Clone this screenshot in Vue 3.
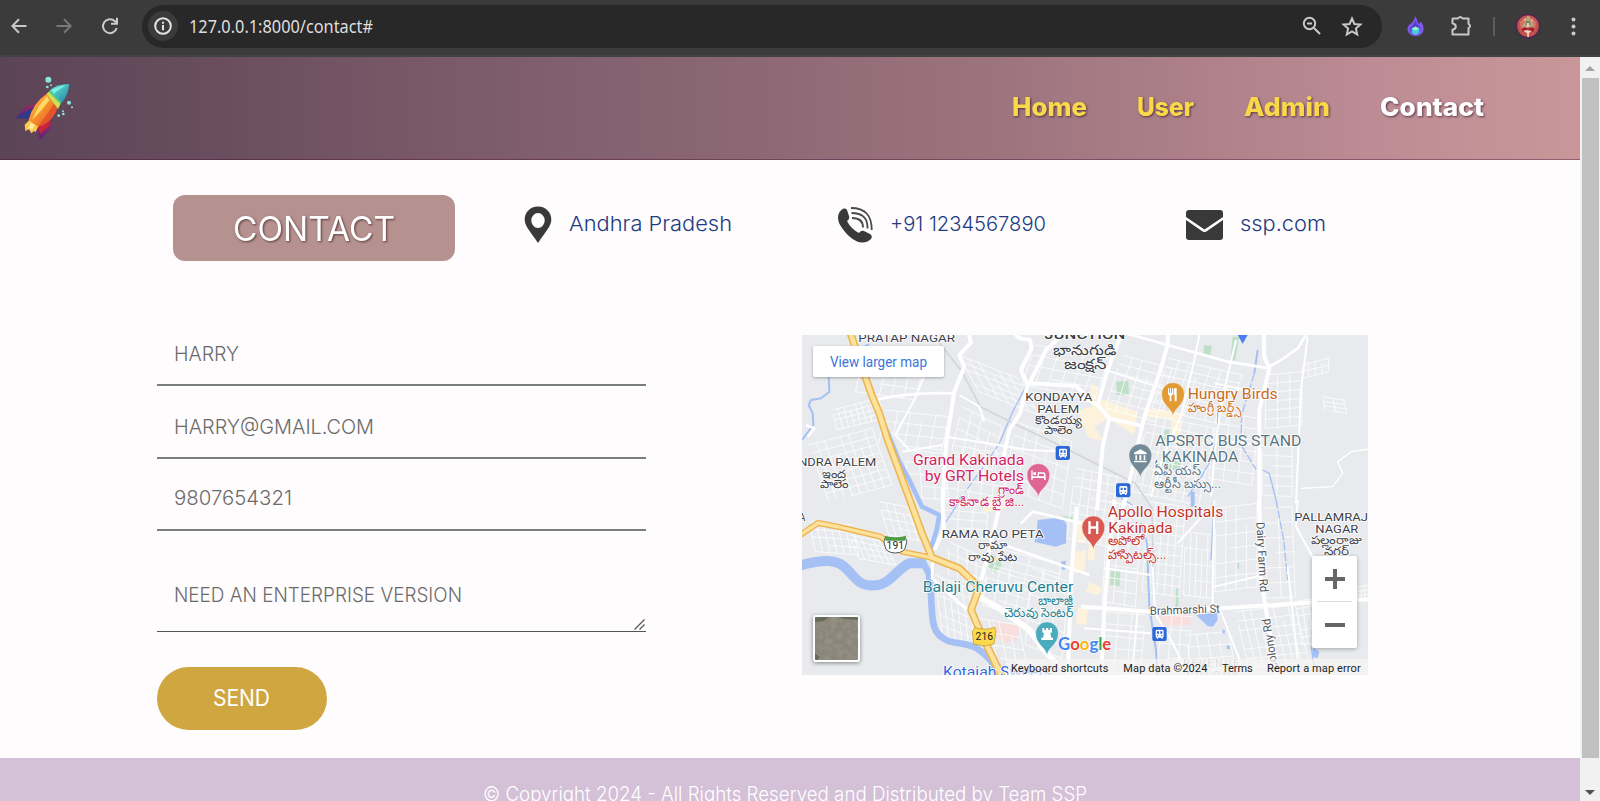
<script setup>
import { h } from 'vue'

// Single line of text fitted to a given width; the box bottom is the baseline.
const FitText = (p) =>
  h('svg', { width: p.w, height: p.size, class: 'fit' }, [
    h('text', { x: 0, y: p.size, 'font-size': p.size, textLength: p.w, lengthAdjust: 'spacingAndGlyphs', fill: 'currentColor' }, p.text),
  ])
FitText.props = ['text', 'w', 'size']

const nav = [
  { t: 'Home', w: 75 },
  { t: 'User', w: 57 },
  { t: 'Admin', w: 86 },
  { t: 'Contact', w: 104, on: true },
]

const fields = [
  { t: 'HARRY', w: 65 },
  { t: 'HARRY@GMAIL.COM', w: 200 },
  { t: '9807654321', w: 118 },
]

// Map labels: [text, x, baseline, width, kind]
const labelSize = { area: 33, big: 38, te: 35, teBig: 43, poi: 45, tePoi: 39 }
const labels = [
  { color: '#3c4148', items: [
    ['PRATAP NAGAR', 169, 21, 290, 'area'],
    ['JUNCTION', 727, 13, 243, 'big'],
    ['భానుగుడి', 754, 60, 190, 'teBig'],
    ['జంక్షన్', 787, 103, 126, 'teBig'],
    ['KONDAYYA', 670, 198, 201, 'area'],
    ['PALEM', 706, 233, 126, 'area'],
    ['కొండయ్య', 699, 266, 141, 'te'],
    ['పాలెం', 726, 297, 87, 'te'],
    ['INDRA PALEM', -22, 393, 245, 'area'],
    ['ఇంద్ర', 60, 428, 72, 'te'],
    ['పాలెం', 53, 458, 86, 'te'],
    ['A', -10, 557, 20, 'area'],
    ['RAMA RAO PETA', 419, 609, 306, 'area'],
    ['రామా', 529, 641, 87, 'te'],
    ['రావు పేట', 498, 679, 148, 'te'],
    ['PALLAMRAJ', 1477, 557, 221, 'area'],
    ['NAGAR', 1540, 593, 129, 'area'],
    ['పల్లంరాజు', 1527, 627, 150, 'te'],
    ['నగర్', 1565, 659, 77, 'te'],
  ] },
  { color: '#d21e63', items: [
    ['Grand Kakinada', 333, 390, 334, 'poi'],
    ['by GRT Hotels', 368, 438, 298, 'poi'],
    ['గ్రాండ్', 587, 477, 80, 'tePoi'],
    ['కాకినాడ బై జి...', 442, 514, 225, 'tePoi'],
  ] },
  { color: '#c96b18', items: [
    ['Hungry Birds', 1157, 191, 270, 'poi'],
    ['హంగ్రీ బర్డ్స్', 1157, 232, 163, 'tePoi'],
  ] },
  { color: '#5b7482', items: [
    ['APSRTC BUS STAND', 1060, 332, 438, 'poi'],
    [', KAKINADA', 1058, 380, 251, 'poi'],
    ['ఏపీ యస్', 1057, 419, 140, 'tePoi'],
    ['ఆర్టీసీ బస్సు...', 1057, 458, 200, 'tePoi'],
  ] },
  { color: '#c5322b', items: [
    ['Apollo Hospitals', 917, 547, 347, 'poi'],
    ['Kakinada', 919, 594, 193, 'poi'],
    ['అపోలో', 917, 631, 108, 'tePoi'],
    ['హాస్పిటల్స్...', 917, 671, 176, 'tePoi'],
  ] },
  { color: '#20808f', items: [
    ['Balaji Cheruvu Center', 362, 772, 452, 'poi'],
    ['బాలాజీ', 707, 810, 107, 'tePoi'],
    ['చెరువు సెంటర్', 605, 847, 209, 'tePoi'],
  ] },
  { color: '#3069dc', items: [['Kotaiah Sweets', 423, 1026, 325, 'poi']] },
]

// Street mesh: a slanted grid as one path.
function mesh(x, y, w, hgt, nx, ny, sx = 0, sy = 0) {
  let d = ''
  for (let i = 0; i <= nx; i++) {
    const a = x + (w * i) / nx
    const o = (sy * i) / nx
    const cut = (i * 37) % 3 === 0 ? 0.25 : 0
    d += `M${a + sx * cut} ${y + o + hgt * cut}L${a + sx} ${y + hgt + o}`
  }
  for (let j = 0; j <= ny; j++) {
    const b = y + (hgt * j) / ny
    const o = (sx * j) / ny
    const cut = (j * 23) % 4 === 1 ? 0.35 : 0
    d += `M${x + o + w * cut} ${b + sy * cut}L${x + w + o} ${b + sy}`
  }
  return d
}

const streets = [
  mesh(90, 225, 140, 60, 8, 4, 15, -35),
  mesh(20, 330, 190, 170, 8, 7, 60, -50),
  mesh(190, 40, 180, 130, 5, 4, -30, 25),
  mesh(250, 225, 190, 100, 5, 3, -20, 20),
  mesh(310, 345, 120, 140, 3, 4, 10, 10),
  mesh(470, 60, 180, 110, 6, 5, 60, 70),
  mesh(480, 215, 120, 130, 4, 4, -30, 60),
  mesh(450, 330, 170, 160, 5, 5, -20, 30),
  mesh(700, 30, 220, 120, 6, 4, -40, 40),
  mesh(640, 260, 170, 200, 5, 5, -30, 60),
  mesh(820, 400, 150, 210, 6, 8, -25, 30),
  mesh(960, 60, 150, 160, 5, 6, -50, 40),
  mesh(1100, 70, 220, 150, 7, 6, -50, 50),
  mesh(1040, 240, 200, 230, 8, 9, -50, 40),
  mesh(1240, 230, 130, 200, 3, 6, -20, 20),
  mesh(1390, 120, 110, 160, 3, 6, 0, -10),
  mesh(1380, 300, 90, 180, 2, 6, 0, 5),
  mesh(1500, 90, 80, 40, 4, 2, 0, -20),
  mesh(1560, 185, 65, 40, 2, 3, 10, 10),
  mesh(1040, 500, 110, 270, 5, 9, -20, 15),
  mesh(920, 500, 100, 300, 3, 8, -20, 15),
  mesh(1150, 590, 85, 190, 5, 4, -5, 10),
  mesh(1240, 520, 125, 250, 4, 6, 0, -15),
  mesh(1385, 520, 85, 270, 2, 6, 10, -5),
  mesh(1300, 830, 180, 170, 8, 6, 40, -20),
  mesh(1480, 800, 110, 130, 6, 6, 20, -20),
  mesh(1080, 840, 90, 170, 3, 4, -15, 5),
  mesh(910, 830, 120, 180, 3, 5, -15, 10),
  mesh(1150, 900, 130, 110, 4, 3, 20, -10),
  mesh(20, 560, 130, 90, 6, 4, 20, 10),
  mesh(140, 600, 110, 70, 6, 4, 30, 20),
  mesh(230, 500, 110, 100, 5, 4, 30, 20),
  mesh(440, 620, 110, 100, 4, 3, 0, 50),
  mesh(400, 720, 100, 180, 5, 6, 20, 40),
  mesh(590, 640, 190, 80, 4, 3, -20, 50),
  mesh(560, 700, 130, 110, 4, 4, -20, 40),
  mesh(690, 700, 110, 230, 3, 6, -20, 40),
  mesh(530, 850, 120, 150, 4, 4, 30, 20),
  mesh(430, 500, 130, 100, 3, 4, -10, 10),
  mesh(1610, 760, 90, 40, 8, 3, 0, -8),
]

const attribution = [
  ['Keyboard shortcuts', 627, 292],
  ['Map data ©2024', 964, 252],
  ['Terms', 1260, 92],
  ['Report a map error', 1395, 281],
]
</script>

<template>
  <div class="window">
    <div class="toolbar">
      <svg class="ti back" width="16" height="16" viewBox="0 0 16 16"><path d="M15.500 8H2M8 1.300L1.300 8L8 14.700" /></svg>
      <svg class="ti fwd" width="16" height="16" viewBox="0 0 16 16"><path d="M.5 8H14M8 1.300L14.700 8L8 14.700" /></svg>
      <svg class="ti reload" width="18" height="18" viewBox="0 0 18 18"><path d="M15.700 11A7 7 0 1 1 14 4.300L16 6.500M16 .8V6.700H10" /></svg>
      <div class="omni">
        <span class="info">
          <svg width="18" height="18" viewBox="0 0 18 18"><circle cx="9" cy="9" r="7.800" fill="none" stroke="#e3e3e3" stroke-width="2" /><path d="M9 8V13.200M9 4.700V6.700" stroke="#e3e3e3" stroke-width="2" /></svg>
        </span>
        <span class="url"><FitText text="127.0.0.1:8000/contact#" :w="184" :size="18" /></span>
        <svg class="ti mag" width="20" height="20" viewBox="0 0 20 20"><circle cx="7.500" cy="7.500" r="5.700" /><path d="M12 12L18 18M5 7.500H10" /></svg>
        <svg class="ti star" width="22" height="21" viewBox="0 0 22 21"><path d="M11 2.500L13.400 8L19.400 8.600L14.900 12.600L16.200 18.500L11 15.400L5.800 18.500L7.100 12.600L2.600 8.600L8.600 8Z" /></svg>
      </div>
      <svg class="flame" width="17" height="20" viewBox="0 0 17 20">
        <path d="M8 0C11 4 10 6 12 8C13 7 13 6 13 5C16 8 17 11 16.500 14C16 18 12 20 8.500 20C4 20 .5 17 .5 13C.5 9 4 8 5.500 6C7 4 8 2 8 0Z" fill="#7a58ea" />
        <path d="M8 4C9 8 12 9 13 12L12 17H4L3 12C5 10 8 8 8 4Z" fill="#5a39d0" />
        <path d="M8.500 10.500L12.300 12.500V17L8.500 19L4.700 17V12.500Z" fill="#4cc8e0" /><path d="M8.500 10.500L12.300 12.500L8.500 14.500L4.700 12.500Z" fill="#8df5c8" />
      </svg>
      <svg class="ti puzzle" width="23" height="22" viewBox="0 0 23 22"><path d="M3 3.500H8Q10.300 .6 12.600 3.500H18.500V8.700Q21.600 11 18.500 13.300V19.500H2.500V14.800Q5.800 14 5.800 11.500Q5.800 9 2.500 8.200V4Z" stroke-linejoin="round" /></svg>
      <i class="sep"></i>
      <svg class="avatar" width="26" height="26" viewBox="0 0 26 26">
        <circle cx="13" cy="13" r="11.500" fill="#c2534e" stroke="#542255" stroke-width="1.400" />
        <path d="M5 9Q13 -1 21 9L20 18L13 12L6 18Z" fill="#d87463" />
        <path d="M12 3H14.500L15.500 7L19 11L17.500 15L14 14L9 16L7 13L10 9Z" fill="#b9a27a" />
        <path d="M11 8H15L15.500 12H10.500Z" fill="#748466" /><path d="M6 16L10 14L13 16L17 14L20 16L18 19H8Z" fill="#a5202b" />
        <path d="M12 10H14V14H12ZM10 5L11 7L9 8ZM17 6L16 8L18 9ZM8 18L12 17L17 18L14 20V24H12.300L12 20Z" fill="#f0d0bd" />
      </svg>
      <svg class="dots" width="5" height="19" viewBox="0 0 5 19"><circle cx="2.500" cy="2.500" r="2" /><circle cx="2.500" cy="9.500" r="2" /><circle cx="2.500" cy="16.500" r="2" /></svg>
    </div>

    <div class="viewport">
      <div class="page">
        <header class="head">
          <svg class="rocket" width="60" height="66" viewBox="0 0 180 198">
            <defs>
              <linearGradient id="body" x1="0" y1="0" x2="1" y2="1"><stop offset="0" stop-color="#ffcf4e" /><stop offset=".5" stop-color="#f78a2b" /><stop offset="1" stop-color="#dc4625" /></linearGradient>
              <linearGradient id="fin" x1="0" y1="0" x2="0" y2="1"><stop offset="0" stop-color="#d12f45" /><stop offset="1" stop-color="#5a2280" /></linearGradient>
              <linearGradient id="nose" x1="0" y1="0" x2="1" y2="1"><stop offset="0" stop-color="#67efdd" /><stop offset="1" stop-color="#207f9c" /></linearGradient>
            </defs>
            <path d="M100 48L64 84L36 90L4 126L42 128L72 100Z" fill="url(#fin)" /><path d="M66 90L36 106L4 126L42 128Z" fill="#303a86" />
            <path d="M132 92L108 130L114 152L78 193L68 156L92 124Z" fill="url(#fin)" /><path d="M110 126L106 148L79 174L70 150Z" fill="#c92438" />
            <path d="M50 128L32 146L34 165L45 160L52 172L60 165L65 168L75 146Z" fill="#ffc94e" /><path d="M50 140L43 156L54 162L63 146Z" fill="#ffeb9c" />
            <path d="M98 54Q56 82 44 132L72 152Q116 136 132 92Z" fill="url(#body)" />
            <path d="M99 61Q69 91 55 132Q84 104 106 73Z" fill="#ffd965" /><path d="M132 92Q116 140 72 152Q100 114 120 84Z" fill="#e2552a" />
            <path d="M98 54L110 41L144 76L132 98Z" fill="#57c985" /><path d="M98 54L104 47L139 84L132 98Z" fill="#d1df51" />
            <path d="M108 43Q128 24 166 24Q162 60 143 80Z" fill="url(#nose)" /><path d="M112 42Q138 28 158 27Q132 42 120 53Z" fill="#8bfff0" opacity=".7" />
            <g fill="#8ae5df"><circle cx="103" cy="11" r="9" /><circle cx="100" cy="33" r="4" /><circle cx="111" cy="28" r="3" /><circle cx="165" cy="80" r="6" /><circle cx="174" cy="94" r="3" /><circle cx="147" cy="106" r="3" /><circle cx="148" cy="114" r="4" /><circle cx="134" cy="119" r="4" /></g>
          </svg>
          <nav class="nav">
            <a v-for="n in nav" :key="n.t" :class="{ on: n.on }"><FitText :text="n.t" :w="n.w" :size="25.500" /></a>
          </nav>
        </header>

        <section class="info-row">
          <h1 class="badge"><FitText text="CONTACT" :w="162" :size="33.500" /></h1>
          <div class="item place">
            <svg width="28" height="38" viewBox="0 0 28 38"><path fill-rule="evenodd" d="M14 .5C6 .5 .7 6.500 .7 13.500C.7 20 6 25 14 37C22 25 27.300 20 27.300 13.500C27.300 6.500 22 .5 14 .5ZM14 7A6.700 7.500 0 1 1 14 22A6.700 7.500 0 1 1 14 7Z" fill="#393939" /></svg>
            <FitText text="Andhra Pradesh" :w="163" :size="20.500" />
          </div>
          <div class="item phone">
            <svg width="36" height="36" viewBox="0 0 36 36">
              <path d="M8 1.500Q5 1 2 6Q-1 13 5 21Q12 31 20 34.500Q28 37.500 34 32Q36 29 33 27L27 24Q24 23 22 26Q14 22 10 14Q13 12 12 9L10 3Q9.500 1.500 8 1.500Z" fill="#393939" />
              <g fill="none" stroke="#4a4a4a" stroke-width="1.800"><path d="M14 1Q35 1 34.700 23" /><path d="M14.500 6Q31 6 30.500 21.500" /><path d="M15 11Q26 11 26 20.500" /></g>
            </svg>
            <FitText text="+91 1234567890" :w="156" :size="20.500" />
          </div>
          <div class="item mail">
            <svg width="37" height="30" viewBox="0 0 37 30"><path d="M3 0H34Q37 0 37 3V7L18.500 19.500L0 7V3Q0 0 3 0ZM0 10L17 21.700Q18.500 22.500 20 21.700L37 10V27Q37 30 34 30H3Q0 30 0 27Z" fill="#393939" /></svg>
            <FitText text="ssp.com" :w="86" :size="20.500" />
          </div>
        </section>

        <section class="main">
          <form class="form" @submit.prevent>
            <div v-for="f in fields" :key="f.t" class="field"><FitText :text="f.t" :w="f.w" :size="20.500" /></div>
            <div class="field message">
              <FitText text="NEED AN ENTERPRISE VERSION" :w="288" :size="20.500" />
              <svg class="grip" width="11" height="11" viewBox="0 0 11 11"><path d="M.5 10.500L10.500 .5M5.500 10.500L10.500 5.500" stroke="#555" stroke-width="1.200" /></svg>
            </div>
            <button class="send"><FitText text="SEND" :w="57" :size="22.500" /></button>
          </form>

          <div class="map">
            <svg class="canvas" width="566" height="340" viewBox="0 0 1698 1020">
              <rect width="1698" height="1020" fill="#e8eaed" />
              <!-- parks, blocks and ponds -->
              <g transform="translate(847 -15)">
                <path fill="#fdf3dc" d="M45 205L160 245L150 315L70 265L30 290L60 335L10 320L-20 240L20 230ZM190 235L300 250L290 270L185 262ZM20 160L40 170L35 220L15 200ZM260 270L290 275L285 340L265 335Z" />
                <path fill="#bfe0c8" d="M95 155L132 152L134 195L97 195ZM360 45L383 48L378 76L357 70ZM445 20L464 20L452 92L438 90ZM240 300L255 298L252 330L238 328ZM245 380L290 400L290 425L262 418L225 405Z" />
              </g>
              <g transform="translate(-8 495)">
                <path fill="#a4c0f5" d="M715 60L790 52L802 75L800 130L770 140L705 126L712 95ZM785 185L800 182L798 208L786 210Z" />
                <path fill="#bfe0c8" d="M575 160L600 175L607 200L585 217L568 205ZM790 48L820 50L820 60L790 58Z" />
                <path fill="#f8dfdd" d="M590 365L665 380L650 420L615 430L590 412Z" />
                <path fill="#fdf3dc" d="M555 0L625 -10L620 25L550 40ZM830 60L860 60L860 130L835 128ZM825 155L860 150L855 215L825 220ZM870 100L890 100L885 180L865 180ZM870 245L910 265L895 285L860 275ZM835 325L865 325L862 375L830 372Z" />
              </g>
              <g transform="translate(847 495)">
                <path fill="#bfe0c8" d="M80 212L108 214L106 258L77 255ZM275 265L284 265L282 320L274 320ZM460 185L465 190L464 210L458 200Z" />
                <path fill="#f8dfdd" d="M228 345H320V374L232 378Z" />
              </g>
              <path v-for="(d, i) in streets" :key="i" :d="d" class="street" />
              <path fill="#a4c0f5" transform="translate(847 495)" d="M335 345L398 337L400 360L385 380L370 378ZM415 388L423 392L420 402L414 398ZM427 435L436 438L437 448L428 447ZM685 440L705 455L700 475L683 468Z" />
              <!-- waterways -->
              <g class="water">
                <g transform="translate(-8 -15)">
                  <path stroke-width="6" d="M88 140L90 185L65 205L35 210L28 225L40 250L42 285L14 322L8 330M150 70Q180 60 210 42" />
                  <path stroke-width="4" d="M680 170L640 245L600 340" /><path stroke-width="4" stroke-dasharray="22 7" d="M600 340L560 400L498 485" />
                  <path stroke-width="14" d="M262 300L300 395L330 450L368 530L420 555L412 600L390 670" />
                  <path stroke-width="4" d="M485 500Q465 540 440 575" />
                </g>
                <g transform="translate(847 -15)">
                  <path stroke-width="6" d="M520 60L510 130" /><path stroke-width="4" stroke-dasharray="26 6" d="M510 130L472 255L470 345L515 418" />
                  <path stroke-width="4" d="M400 240L400 310L380 390L345 450L310 500M535 420L555 430L575 510M110 505L145 525" />
                  <path stroke-width="12" d="M325 485L325 530" />
                </g>
                <g transform="translate(-8 495)"><path stroke-width="30" d="M0 197C70 178 115 175 145 210S185 258 228 256S290 210 330 190L372 190" /><path stroke-width="20" d="M368 180L388 220C402 300 390 370 415 400C445 440 500 420 540 450S580 490 600 540" /></g>
                <g transform="translate(847 495)">
                  <path stroke-width="6" d="M170 70L188 130L195 320L215 450L220 540" /><path stroke-width="4" stroke-dasharray="26 6" d="M575 0L598 120L610 240" /><path stroke-width="4" d="M390 0L380 180M680 440L690 500" />
                </g>
              </g>
              <!-- railway -->
              <path d="M405 15L480 110L535 215L640 268L760 325L900 395L1000 445L1050 520L1055 760" fill="none" stroke="#d3d5d8" stroke-width="5" />
              <!-- main roads -->
              <g class="road">
                <g transform="translate(-8 -15)">
                  <path d="M505 0L515 38L480 75L495 110L465 185L440 345L430 510L433 600L405 660" />
                  <path d="M635 0L660 25L692 30L697 55L665 120L685 165L662 250L630 300L612 385" />
                  <path d="M805 0L740 60L690 160L830 168L870 205" />
                  <path d="M225 210Q330 185 470 190" class="mid" /><path d="M375 135L350 200L288 315L330 360" class="thin" /><path d="M480 195L540 230L555 275M440 320L690 360L800 365M310 365L430 345" class="thin" />
                  <path d="M20 285L45 295L25 320" class="mid" />
                </g>
                <g transform="translate(847 -15)">
                  <path d="M250 15L250 45L225 130L180 260L155 370L115 540" /><path d="M-20 195L40 225L75 265L55 350L38 540M75 265L170 287M40 225L70 120L110 15" />
                  <path d="M125 10L250 45L340 70L430 95L555 115" class="mid" /><path d="M538 0L540 80L555 115L525 240L525 540" /><path d="M555 110L590 90L640 55L665 15" class="mid" />
                  <path d="M345 15L330 90L290 260L240 370L200 500M455 30L415 200L395 330L380 500M670 20L650 180L635 520" class="thin" />
                  <path d="M65 120L170 155L320 200M390 160L530 190M395 330L525 345" class="thin" />
                  <path d="M870 355L800 365L760 395L775 430L745 470L650 475" class="hair" />
                </g>
                <g transform="translate(-8 495)">
                  <path d="M530 285L600 325L690 390L735 450L770 490" class="wide" /><path d="M598 30L570 150L545 240M832 20L815 240L805 540" /><path d="M400 180L398 235L520 345M600 130L870 225M665 70L700 35L850 70" class="mid" />
                </g>
                <g transform="translate(847 495)">
                  <path d="M90 0L70 200L60 325L50 540M-10 320L60 325L200 335L410 325L640 310L870 297M525 0L530 240L545 330L580 540" />
                  <path d="M205 200L212 340L260 420L300 500M390 260L525 228M410 335L470 490M640 0L635 80L690 180M390 0L385 320" class="thin" />
                  <path d="M160 330L145 500M60 205L200 225M280 130L370 30M610 200L640 480M0 385L200 400" class="thin" />
                </g>
              </g>
              <!-- highways -->
              <g class="hw edge"><path d="M142 -15L207 175L232 235L257 315L318 480L360 595L390 668L472 700L532 757L507 825L537 895L602 1030" /><path d="M-8 602L48 564L112 576L235 605L300 650L388 668" class="branch" /></g>
              <g class="hw core"><path d="M142 -15L207 175L232 235L257 315L318 480L360 595L390 668L472 700L532 757L507 825L537 895L602 1030" /><path d="M-8 602L48 564L112 576L235 605L300 650L388 668" class="branch" /></g>

              <!-- labels -->
              <g v-for="g in labels" :key="g.color" :fill="g.color" class="labels">
                <text v-for="([t, x, y, w, k], i) in g.items" :key="i" :x="x" :y="y" :font-size="labelSize[k]" :textLength="w" lengthAdjust="spacingAndGlyphs" :class="'k-' + k">{{ t }}</text>
              </g>
              <g class="labels" fill="#50555c">
                <text font-size="35" textLength="210" lengthAdjust="spacingAndGlyphs" transform="translate(1044 840) rotate(-2)">Brahmarshi St</text>
                <text font-size="35" textLength="210" lengthAdjust="spacingAndGlyphs" transform="translate(1363 562) rotate(87)">Dairy Farm Rd</text>
                <text font-size="35" textLength="155" lengthAdjust="spacingAndGlyphs" transform="translate(1428 1002) rotate(-99)">Colony Rd</text>
              </g>
              <g class="labels" fill="#3c4148" opacity=".45"><text x="1144" y="997" font-size="30" textLength="166">REVENUE</text><text x="1154" y="1031" font-size="30" textLength="155">COLONY</text></g>
              <!-- road shields -->
              <g transform="translate(-8 495)" font-size="31" text-anchor="middle">
                <path d="M258 112Q288 121 318 112Q326 126 319 138Q317 158 288 159Q259 158 257 138Q250 126 258 112Z" fill="#fff" stroke="#555" stroke-width="3" /><path d="M256 107Q288 117 320 107L317 122H259Z" fill="#4f9c46" /><text x="288" y="146" fill="#222">191</text>
                <path d="M527 382Q555 393 586 382L590 395L584 432L555 438L523 432L519 395Z" fill="#fbd94d" stroke="#b89324" stroke-width="2" /><text x="555" y="421" fill="#222">216</text>
              </g>
              <!-- station badges -->
              <g v-for="[x, y] in [[783, 354], [964, 466], [1073, 897]]" :key="x" :transform="`translate(${x} ${y})`">
                <rect x="-22" y="-21" width="43" height="42" rx="6" fill="#2c68d8" /><path fill-rule="evenodd" fill="#fff" d="M-12 -9Q-12 -13 -7 -13H7Q12 -13 12 -9V7Q12 10 9 11V14H5V11H-5V14H-9V11Q-12 10 -12 7ZM-8 -8V-1H-2V-8ZM2 -8V-1H8V-8ZM-8 4V7H-4V4ZM4 4V7H8V4Z" />
              </g>
              <!-- pins -->
              <g v-for="p in [{ x: 709, y: 420, c: '#df6592' }, { x: 1113, y: 177, c: '#e29a33' }, { x: 1015, y: 361, c: '#738a98' }, { x: 874, y: 577, c: '#d95a52' }, { x: 735, y: 895, c: '#4aabbd' }]" :key="p.x" :transform="`translate(${p.x} ${p.y})`">
                <path d="M0 66C-3 42 -34 33 -34 0A34 34 0 1 1 34 0C34 33 3 42 0 66Z" :fill="p.c" stroke="#fff" stroke-opacity=".5" stroke-width="2" />
              </g>
              <g fill="#fff">
                <path fill-rule="evenodd" d="M688 406H692V424H707V412H725Q731 413 731 420V435H726V429H692V435H688ZM694 412H702V420H694ZM711 416V424H727Q727 416 722 416Z" />
                <path d="M1098 160H1101V173H1104V160H1107V173H1110V160H1113V177Q1112 181 1108 182V199H1103V182Q1098 180 1098 176ZM1118 199V180H1115V163Q1118 158 1124 159V199Z" />
                <path d="M996 353L1015 343L1034 353V358H996ZM1000 361H1005V375H1000ZM1012 361H1018V375H1012ZM1025 361H1030V375H1025ZM996 377H1034V382H996Z" />
                <path d="M859 559H866V574H882V559H889V597H882V581H866V597H859Z" />
                <path d="M721 879H727V885H732V879H739V885H744V879H750V892L745 895L748 908H753V915H718V908H723L726 895L721 892Z" />
              </g>
              <path d="M1307 0H1337L1322 26Z" fill="#4b7fee" />
              <!-- logo and attribution -->
              <text x="768" y="946" font-size="50" textLength="160" lengthAdjust="spacingAndGlyphs" class="logo"><tspan fill="#4285f4">G</tspan><tspan fill="#e94235">o</tspan><tspan fill="#fabb05">o</tspan><tspan fill="#4285f4">g</tspan><tspan fill="#34a853">l</tspan><tspan fill="#e94235">e</tspan></text>
              <rect x="618" y="972" width="1080" height="48" fill="#f5f5f5" opacity=".72" />
              <g class="attr"><text v-for="[t, x, w] in attribution" :key="t" :x="x" y="1010" :textLength="w">{{ t }}</text></g>
            </svg>
            <a class="larger"><FitText text="View larger map" :w="97" :size="14" /></a>
            <svg class="sat" width="43" height="43" viewBox="0 0 43 43">
              <defs><filter id="grain"><feTurbulence type="fractalNoise" baseFrequency=".18" numOctaves="3" seed="4" /><feColorMatrix values="0 0 0 0 .3  0 0 0 0 .31  0 0 0 0 .25  1.600 0 0 0 -.55" /></filter></defs>
              <rect width="43" height="43" fill="#8b8579" /><rect width="43" height="43" filter="url(#grain)" /><path d="M0 0H14L9 4L0 5ZM22 0H43V3L30 2ZM0 36L5 40L3 43H0Z" fill="#566049" opacity=".7" />
            </svg>
            <div class="zoom"><i class="plus"></i><i class="minus"></i></div>
          </div>
        </section>

        <footer class="foot"><FitText text="© Copyright 2024 - All Rights Reserved and Distributed by Team SSP" :w="604" :size="20" /></footer>
      </div>
      <div class="scroll"><i class="up"></i><i class="thumb"></i><i class="down"></i></div>
    </div>
  </div>
</template>

<style>
html, body { margin: 0; overflow: hidden; }
.fit { display: block; overflow: visible; flex: none; }
</style>

<style scoped>
* { box-sizing: border-box; }
.window { width: 1600px; height: 801px; overflow: hidden; background: #fefcfd; font-family: Inter, "Liberation Sans", sans-serif; }
.toolbar { height: 57px; background: #3b3b3b; border-bottom: 2px solid #3f4343; display: flex; align-items: center; padding: 0 24px 3px 11px; }
.ti { fill: none; stroke: #c9c9c9; stroke-width: 2; flex: none; }
.fwd { stroke: #777; margin-left: 29px; }
.reload { margin-left: 29px; }
.omni { width: 1240px; height: 43px; margin-left: 23px; border-radius: 22px; background: #282828; display: flex; align-items: center; padding: 0 19px 0 6px; }
.info { width: 30px; height: 30px; border-radius: 50%; background: #3b3b3b; display: grid; place-items: center; }
.url { margin: -5px auto 0 11px; color: #dedede; font-family: "Noto Sans", "Open Sans", sans-serif; }
.star { margin-left: 19px; }
.flame { margin-left: 25px; }
.puzzle { margin-left: 26px; }
.sep { width: 2px; height: 19px; background: #5d5d5d; margin-left: 20px; }
.avatar { margin-left: 20px; }
.dots { fill: #c9c9c9; margin-left: auto; }
.viewport { display: flex; height: 744px; }
.page { width: 1580px; overflow: hidden; }
.head { height: 103px; display: flex; justify-content: space-between; padding: 20px 96px 0 14px; background: linear-gradient(90deg, #5c4457, #674c5d 12%, #785867 26%, #9b737d 62%, #be8c94 88%, #c99799); box-shadow: inset 0 -1px rgba(70, 10, 50, .4); }
.rocket { display: block; margin-top: -1px; }
.nav { display: flex; gap: 50px; padding-top: 13px; font-weight: 800; color: #f9d849; filter: drop-shadow(1.500px 1.500px 1px rgba(40, 10, 35, .65)); }
.nav .on { color: #fff; }
.info-row { display: flex; height: 175px; padding: 35px 0 0 173px; }
.badge { width: 282px; height: 66px; margin: 0; padding: 11.500px 0 0 60px; border-radius: 12px; background: #b5918f; color: #fff; font-weight: 400; }
.badge .fit { filter: drop-shadow(1.500px 1.500px 1px rgba(45, 15, 15, .65)); }
.item { display: flex; height: 46px; align-items: center; color: #1d3b80; font-weight: 300; padding-top: 13px; }
.item .fit { margin-top: -9px; }
.place { margin-left: 69px; gap: 17px; }
.phone { margin-left: 105px; gap: 17px; }
.mail { margin-left: 140px; gap: 17px; }
.main { display: flex; height: 423px; }
.form { width: 489px; margin-left: 157px; }
.field { height: 72.500px; border-bottom: 2px solid #7b7e7e; padding: 26.500px 0 0 17px; color: #6b6b6b; font-weight: 300; }
.field:first-child { height: 51px; padding-top: 5px; }
.field:nth-child(3) { padding-top: 25.500px; }
.message { position: relative; height: 101px; border-bottom: 1.500px solid #515557; padding-top: 50px; }
.grip { position: absolute; right: 1px; bottom: 1px; }
.send { display: flex; align-items: flex-start; width: 170px; height: 63px; margin-top: 35px; padding: 15.500px 0 0 56px; border: 0; border-radius: 32px; background: #d0a640; color: #fff; font: 400 22px Inter, sans-serif; }
.map { position: relative; width: 566px; height: 340px; margin-left: 156px; overflow: hidden; font-family: Roboto, sans-serif; }
.canvas { display: block; }
.street { fill: none; stroke: #fff; stroke-width: 3; opacity: .75; }
.water path { fill: none; stroke: #a4c0f5; stroke-linejoin: round; }
.road path { fill: none; stroke: #fff; stroke-width: 12; stroke-linejoin: round; }
.road .hair { stroke-width: 4; }
.road .thin { stroke-width: 6; }
.road .mid { stroke-width: 8; }
.road .wide { stroke-width: 18; }
.hw { fill: none; stroke-linejoin: round; }
.edge { stroke: #edb34f; stroke-width: 23; }
.edge .branch { stroke-width: 18; }
.core { stroke: #fce29b; stroke-width: 14; }
.core .branch { stroke-width: 10; }
.labels { stroke: #fff; stroke-width: 5; paint-order: stroke; stroke-linejoin: round; }
.k-te, .k-teBig, .k-big { font-weight: 500; }
.logo { font-family: Lato, sans-serif; font-weight: 700; stroke: #fff; stroke-width: 4; paint-order: stroke; }
.attr { font-size: 33px; fill: #222; }
.larger { position: absolute; left: 11px; top: 11px; width: 131px; height: 31px; padding: 6.500px 0 0 17px; background: #fff; border-radius: 2px; color: #3c74dd; box-shadow: 0 1px 3px rgba(0, 0, 0, .3); }
.sat { position: absolute; left: 11px; top: 280px; width: 47px; height: 47px; border: 2px solid #fff; border-radius: 3px; box-shadow: 0 1px 4px rgba(0, 0, 0, .45); }
.zoom { position: absolute; left: 510px; top: 221px; width: 45px; height: 92px; background: #fff; border-radius: 2px; box-shadow: 0 1px 4px rgba(0, 0, 0, .3); display: grid; grid-template-rows: 1fr 1fr; place-items: center; }
.zoom::before { content: ""; position: absolute; left: 5px; right: 5px; top: 45px; height: 1px; background: #ddd; }
.plus { width: 20px; height: 20px; background: linear-gradient(#666, #666) center / 20px 4px no-repeat, linear-gradient(#666, #666) center / 4px 20px no-repeat; }
.minus { width: 20px; height: 4px; background: #666; }
.foot { height: 60px; background: #d4c0d7; color: #fff; font-weight: 300; padding: 23px 0 0 483px; }
.scroll { width: 20px; background: #f1f1f1; display: flex; flex-direction: column; align-items: center; }
.up { border: 5px solid transparent; border-top: 0; border-bottom-color: #a3a3a3; margin: 9px 0 7px; }
.thumb { width: 17px; height: 680px; background: #c1c1c1; }
.down { border: 5px solid transparent; border-bottom: 0; border-top-color: #505050; margin-top: 32px; }
</style>
